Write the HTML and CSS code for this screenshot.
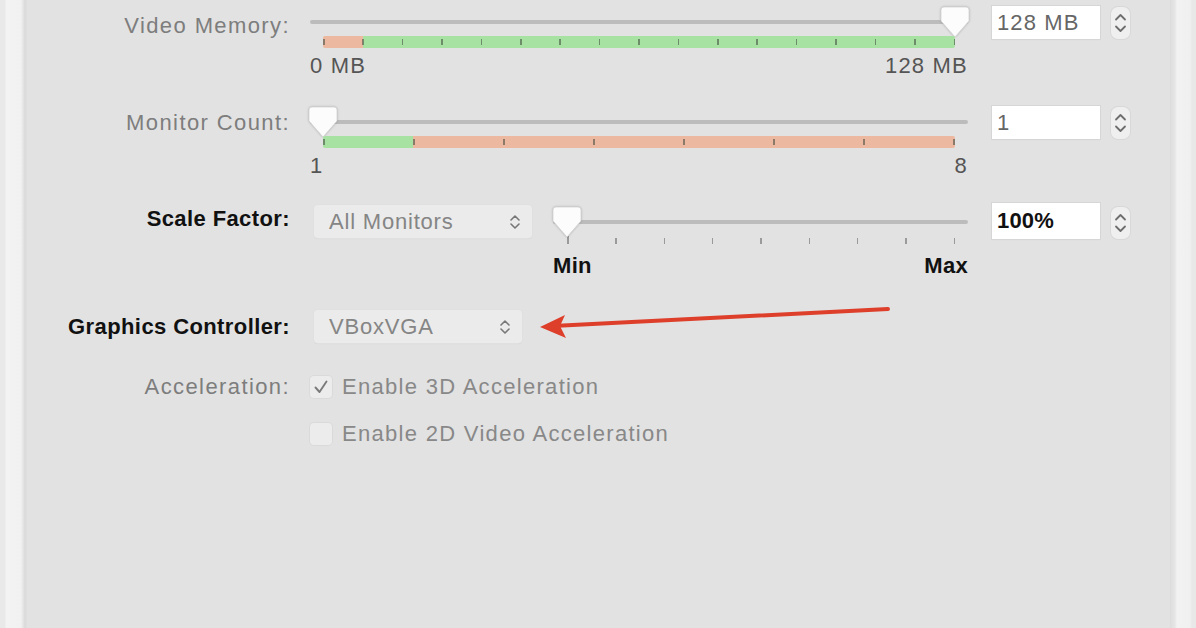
FILE: index.html
```html
<!DOCTYPE html>
<html>
<head>
<meta charset="utf-8">
<link rel="stylesheet" href="styles.css">
</head>
<body>
<div class="window">
  <div class="edge edge-left"></div>
  <main class="panel">

    <div class="row row-video">
      <div class="label">Video Memory:</div>
      <div class="slider">
        <div class="track">
          <svg class="thumb" viewBox="0 0 30 32" width="30" height="32"><path d="M4 1 H26 Q29 1 29 4 V15 L15 31 L1 15 V4 Q1 1 4 1 Z"/></svg>
        </div>
        <div class="bar">
          <div class="seg seg-red" style="width:6.25%"></div>
          <div class="seg seg-green" style="width:93.75%"></div>
          <div class="ticks">
            <i></i><i></i><i></i><i></i><i></i><i></i><i></i><i></i><i></i><i></i><i></i><i></i><i></i><i></i><i></i><i></i><i></i>
          </div>
        </div>
        <div class="ends"><span>0 MB</span><span>128 MB</span></div>
      </div>
      <div class="field">128 MB</div>
      <div class="stepper"><svg viewBox="0 0 19 32" width="19" height="32"><path d="M5 12.5 L9.5 8 L14 12.5 M5 19.5 L9.5 24 L14 19.5"/></svg></div>
    </div>

    <div class="row row-monitor">
      <div class="label">Monitor Count:</div>
      <div class="slider">
        <div class="track">
          <svg class="thumb" viewBox="0 0 30 32" width="30" height="32"><path d="M4 1 H26 Q29 1 29 4 V15 L15 31 L1 15 V4 Q1 1 4 1 Z"/></svg>
        </div>
        <div class="bar">
          <div class="seg seg-green" style="width:14.2857%"></div>
          <div class="seg seg-red" style="width:85.7143%"></div>
          <div class="ticks">
            <i></i><i></i><i></i><i></i><i></i><i></i><i></i><i></i>
          </div>
        </div>
        <div class="ends"><span>1</span><span>8</span></div>
      </div>
      <div class="field">1</div>
      <div class="stepper"><svg viewBox="0 0 19 32" width="19" height="32"><path d="M5 12.5 L9.5 8 L14 12.5 M5 19.5 L9.5 24 L14 19.5"/></svg></div>
    </div>

    <div class="row row-scale">
      <div class="label strong">Scale Factor:</div>
      <div class="content">
        <div class="popup popup-wide"><span>All Monitors</span><svg viewBox="0 0 14 20" width="14" height="20"><path d="M3 8 L7 4 L11 8 M3 12 L7 16 L11 12"/></svg></div>
        <div class="slider slider-scale">
          <div class="track">
            <svg class="thumb" viewBox="0 0 30 32" width="30" height="32"><path d="M4 1 H26 Q29 1 29 4 V15 L15 31 L1 15 V4 Q1 1 4 1 Z"/></svg>
          </div>
          <div class="tickrow">
            <i></i><i></i><i></i><i></i><i></i><i></i><i></i><i></i><i></i>
          </div>
          <div class="ends strong"><span>Min</span><span>Max</span></div>
        </div>
      </div>
      <div class="field strong">100%</div>
      <div class="stepper"><svg viewBox="0 0 19 32" width="19" height="32"><path d="M5 12.5 L9.5 8 L14 12.5 M5 19.5 L9.5 24 L14 19.5"/></svg></div>
    </div>

    <div class="row row-controller">
      <div class="label strong">Graphics Controller:</div>
      <div class="content">
        <div class="popup popup-narrow"><span>VBoxVGA</span><svg viewBox="0 0 14 20" width="14" height="20"><path d="M3 8 L7 4 L11 8 M3 12 L7 16 L11 12"/></svg></div>
      </div>
    </div>

    <div class="row row-check">
      <div class="label">Acceleration:</div>
      <div class="content check-line">
        <span class="checkbox"><svg viewBox="0 0 22 22" width="22" height="22"><path d="M5.5 11.5 L9.5 16 L16.5 5.5"/></svg></span>
        <span class="check-text">Enable 3D Acceleration</span>
      </div>
    </div>

    <div class="row row-check row-check2">
      <div class="label"></div>
      <div class="content check-line">
        <span class="checkbox"></span>
        <span class="check-text">Enable 2D Video Acceleration</span>
      </div>
    </div>

    <svg class="arrow" viewBox="0 0 360 40" width="360" height="40">
      <line x1="18" y1="25.8" x2="348" y2="9" />
      <polygon points="0,27 25,15 20,26 26,38" />
    </svg>
  </main>
  <div class="edge edge-right"></div>
</div>
</body>
</html>
```

FILE: styles.css
```css
* { box-sizing: border-box; }

html, body {
  margin: 0;
  padding: 0;
}

body {
  width: 1196px;
  height: 628px;
  overflow: hidden;
  background: #ececec;
  font-family: "Liberation Sans", Arial, sans-serif;
  font-size: 22px;
  color: #7d7d7d;
}

.window {
  display: flex;
  height: 628px;
}

.edge {
  flex: none;
  height: 100%;
}

.edge-left {
  width: 27px;
  background: linear-gradient(to right, #e9e9e9 0, #e9e9e9 5px, #f3f3f3 6px, #f1f1f1 21px, #dadada 25px, #e0e0e0 27px);
}

.edge-right {
  width: 26px;
  background: linear-gradient(to right, #dcdcdc 0, #e6e6e6 5px, #f2f2f2 7px, #f0f0f0 20px, #e8e8e8 22px, #e8e8e8 26px);
}

.panel {
  position: relative;
  flex: none;
  width: 1143px;
  height: 100%;
  background: #e2e2e2;
  padding-top: 8px;
}

.row {
  display: flex;
  align-items: flex-start;
}

.label {
  flex: none;
  width: 263px;
  margin-right: 20px;
  text-align: right;
  line-height: 28px;
  letter-spacing: 1.4px;
  white-space: nowrap;
}

.strong {
  color: #111;
  font-weight: bold;
  letter-spacing: 0.4px;
}

.label.strong { letter-spacing: 0.4px; }

.row-video .label { padding-top: 4px; }

.row-monitor { margin-top: 30px; }
.row-monitor .label { padding-top: 1px; }

.row-scale { margin-top: 30px; }
.row-scale .label { line-height: 22px; }

.row-controller {
  margin-top: 32px;
  align-items: center;
}
.row-controller .label { line-height: 33px; }

.row-check { margin-top: 32px; }
.row-check .label { line-height: 24px; }
.row-check2 { margin-top: 23px; }

.content {
  flex: none;
  width: 658px;
  display: flex;
  align-items: flex-start;
}

/* slider */
.slider {
  flex: none;
  width: 658px;
}

.track {
  position: relative;
  height: 28px;
}

.track::before {
  content: "";
  position: absolute;
  left: 0;
  right: 0;
  top: 12px;
  height: 4px;
  border-radius: 2px;
  background: #bcbcbc;
}

.thumb {
  position: absolute;
  top: -2px;
  filter: drop-shadow(0 0.5px 0.8px rgba(0, 0, 0, 0.22));
}

.row-video .thumb { right: -2px; }
.row-monitor .thumb { left: -2px; }
.slider-scale .thumb { left: -1px; }

.thumb path {
  fill: #fcfcfc;
  stroke: #cfcfcf;
  stroke-width: 0.7;
}

.bar {
  position: relative;
  display: flex;
  height: 12px;
  margin: 0 13px;
  border-radius: 2px;
  overflow: hidden;
}

.seg { height: 100%; }
.seg-red { background: #ecb89f; }
.seg-green { background: #a8e2a2; }

.ticks {
  position: absolute;
  inset: 0;
  display: flex;
  justify-content: space-between;
  align-items: center;
}

.ticks i {
  display: block;
  width: 1.5px;
  height: 6px;
  background: rgba(60, 70, 60, 0.55);
}

.ends {
  display: flex;
  justify-content: space-between;
  margin-top: 6px;
  line-height: 24px;
  color: #555;
  letter-spacing: 1.2px;
}

.ends.strong {
  color: #111;
  letter-spacing: 0.3px;
}

.slider-scale {
  width: 415px;
  margin-left: 21px;
}

.tickrow {
  display: flex;
  justify-content: space-between;
  height: 10px;
  padding: 0 13px 0 14px;
}

.tickrow i {
  display: block;
  width: 1.5px;
  height: 6px;
  margin-top: 2px;
  background: #9a9a9a;
}

.tickrow i:first-child {
  height: 8px;
  margin-top: 0;
}

.slider-scale .ends { margin-top: 8px; }

/* fields */
.field {
  flex: none;
  width: 108px;
  height: 33px;
  margin-left: 24px;
  margin-top: -2px;
  padding-left: 5px;
  background: #fff;
  box-shadow: 0 0 0 1px #d6d6d6, 0 1px 1px rgba(0, 0, 0, 0.06);
  line-height: 33px;
  color: #666;
  letter-spacing: 1.1px;
}

.field.strong {
  color: #111;
  letter-spacing: 0.2px;
  height: 36px;
  line-height: 36px;
  margin-top: -5px;
}

.stepper {
  flex: none;
  width: 19px;
  height: 32px;
  margin-left: 11px;
  margin-top: -1px;
  border-radius: 7px;
  background: #efefef;
  box-shadow: 0 0 0 1px #d8d8d8;
}

.stepper svg { display: block; }
.stepper path {
  fill: none;
  stroke: #6d6d6d;
  stroke-width: 1.8;
  stroke-linecap: round;
  stroke-linejoin: round;
}

/* popups */
.popup {
  flex: none;
  display: flex;
  align-items: center;
  justify-content: space-between;
  height: 33px;
  margin-left: 4px;
  padding: 0 10px 0 15px;
  border-radius: 4px;
  background: #ebebeb;
  box-shadow: 0 0 0 1px #e0e0e0, 0 1px 1px rgba(0, 0, 0, 0.08);
  color: #858585;
  letter-spacing: 0.8px;
}

.popup-wide { width: 218px; margin-top: -3px; }
.popup-narrow { width: 208px; }

.popup svg { flex: none; }
.popup path {
  fill: none;
  stroke: #777;
  stroke-width: 1.6;
  stroke-linecap: round;
  stroke-linejoin: round;
}

/* checkboxes */
.check-line {
  align-items: center;
  height: 24px;
}

.checkbox {
  flex: none;
  width: 22px;
  height: 22px;
  border-radius: 4px;
  background: #ececec;
  box-shadow: 0 0 0 1px #dadada;
  display: block;
}

.checkbox svg { display: block; }
.checkbox path {
  fill: none;
  stroke: #7a7a7a;
  stroke-width: 1.9;
  stroke-linecap: round;
  stroke-linejoin: round;
}

.check-text {
  margin-left: 10px;
  line-height: 24px;
  color: #888;
  letter-spacing: 1.3px;
  white-space: nowrap;
}

/* annotation arrow */
.arrow {
  position: absolute;
  left: 513px;
  top: 300px;
}

.arrow line {
  stroke: #de3f2b;
  stroke-width: 4;
  stroke-linecap: round;
}

.arrow polygon {
  fill: #de3f2b;
}
```
